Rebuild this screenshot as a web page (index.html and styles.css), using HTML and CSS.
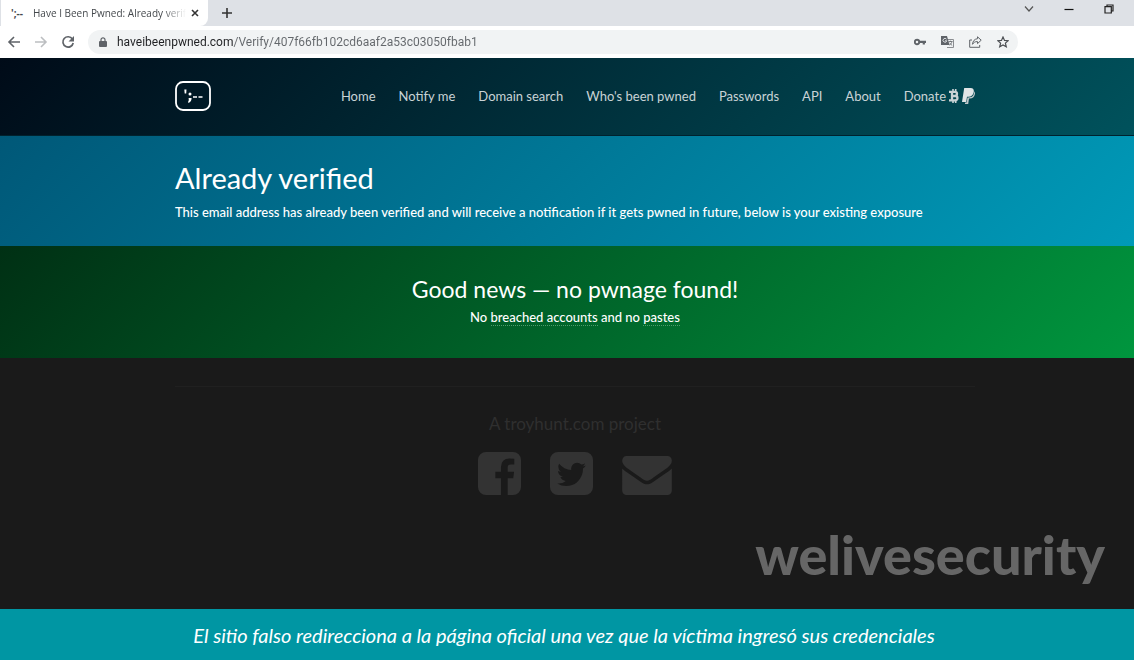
FILE: index.html
```html
<!DOCTYPE html>
<html lang="en">
<head>
    <meta charset="UTF-8">
    <title>Have I Been Pwned: Already verified</title>
    <link rel="stylesheet" href="styles.css">
</head>
<body>
    <div class="tab-strip">
        <div class="tab">
            <span class="favicon">';--</span>
            <span class="tab-title">Have I Been Pwned: Already verif</span>
            <button class="icon-btn tab-close" aria-label="Close tab">
                <svg width="8" height="8" viewBox="0 0 8 8"><path d="M1 1l6 6M7 1L1 7" stroke="#333" stroke-width="1.6"/></svg>
            </button>
        </div>
        <button class="icon-btn new-tab" aria-label="New tab">
            <svg width="12" height="12" viewBox="0 0 12 12"><path d="M6 1v10M1 6h10" stroke="#333" stroke-width="1.6"/></svg>
        </button>
        <div class="window-controls">
            <button class="icon-btn" aria-label="Search tabs">
                <svg width="10" height="10" viewBox="0 0 10 10"><path d="M1 2.500l4 4.500 4-4.500" fill="none" stroke="#555" stroke-width="1.200"/></svg>
            </button>
            <button class="icon-btn" aria-label="Minimize">
                <svg width="10" height="10" viewBox="0 0 10 10"><path d="M0.500 5.500h9" stroke="#111" stroke-width="1.200"/></svg>
            </button>
            <button class="icon-btn" aria-label="Restore">
                <svg width="10" height="10" viewBox="0 0 10 10"><path d="M1 2.700h6.300v6.300H1zM3 2.500V1h6v6H7.500" fill="none" stroke="#222" stroke-width="1.200"/></svg>
            </button>
        </div>
    </div>

    <div class="toolbar">
        <button class="icon-btn" aria-label="Back">
            <svg width="14" height="14" viewBox="0 0 14 14"><path d="M13 7H2M7 2L2 7l5 5" fill="none" stroke="#5f6368" stroke-width="1.600"/></svg>
        </button>
        <button class="icon-btn" aria-label="Forward">
            <svg width="14" height="14" viewBox="0 0 14 14"><path d="M1 7h11M7 2l5 5-5 5" fill="none" stroke="#bcbec1" stroke-width="1.600"/></svg>
        </button>
        <button class="icon-btn" aria-label="Reload">
            <svg width="14" height="14" viewBox="0 0 14 14"><path d="M11.400 4A5.200 5.200 0 1 0 12.200 8" fill="none" stroke="#5f6368" stroke-width="1.700"/><path d="M13 1v5.500H7.500z" fill="#5f6368"/></svg>
        </button>
        <div class="address-bar">
            <svg width="8" height="10" viewBox="0 0 8 10"><path d="M2 4V2.800a2 2 0 0 1 4 0V4" fill="none" stroke="#5f6368" stroke-width="1.200"/><rect y="4" width="8" height="6" rx="1" fill="#5f6368"/></svg>
            <input type="text" class="url" aria-label="Address" value="haveibeenpwned.com/Verify/407f66fb102cd6aaf2a53c03050fbab1">
            <button class="icon-btn" aria-label="Passwords">
                <svg width="12" height="12" viewBox="0 0 12 12"><circle cx="3" cy="6" r="2.200" fill="none" stroke="#5f6368" stroke-width="1.900"/><path d="M5 5.800h7M9.800 6v2.600" stroke="#5f6368" stroke-width="2.200"/></svg>
            </button>
            <button class="icon-btn" aria-label="Translate">
                <svg width="13" height="12" viewBox="0 0 13 12"><path d="M5 3.500h7.500v8H6" fill="none" stroke="#8a8d91"/><path d="M0 0h6l2.500 9H0z" fill="#5f6368"/><path d="M5.500 3.200A1.900 1.900 0 1 0 5.800 4.800H4" fill="none" stroke="#e8eaed" stroke-width=".9"/><path d="M7.500 5.500h4M9.500 4.700v.8M11 5.500c-.5 2-1.500 3-2.600 3.600M8.600 7l2.600 2.500" fill="none" stroke="#5f6368" stroke-width=".8"/></svg>
            </button>
            <button class="icon-btn" aria-label="Share">
                <svg width="13" height="12" viewBox="0 0 13 12"><path d="M3 4H.700v7.300h10V9" fill="none" stroke="#5f6368"/><path d="M8.500.800l3.700 3.400-3.700 3.400V5.600C6 5.500 4.500 6.500 3.500 8.300 3.800 5 5.500 3 8.500 2.700z" fill="none" stroke="#5f6368"/></svg>
            </button>
            <button class="icon-btn" aria-label="Bookmark">
                <svg width="12" height="12" viewBox="0 0 12 12"><path d="M6 1l1.500 3.400 3.700.300-2.800 2.400.9 3.700L6 8.900l-3.300 1.900.9-3.700L.800 4.700l3.700-.300z" fill="none" stroke="#4b4e52" stroke-width="1.200"/></svg>
            </button>
        </div>
    </div>

    <header class="band navbar">
        <div class="container nav-row">
            <a class="logo" href="#" aria-label="Have I Been Pwned">
                <svg width="36" height="30" viewBox="0 0 36 30"><rect x="1" y="1" width="34" height="28" rx="7" fill="none" stroke="#fff" stroke-width="1.800"/><path d="M9.300 8.500h2.200l-.3 4h-1.500z" fill="#fff"/><circle cx="15" cy="13" r="1.500" fill="#fff"/><path d="M13.600 17h3c0 2.300-.9 4-2.900 4.900l-.7-1c.7-.6 1-1.500.6-3.900z" fill="#fff"/><path d="M18 16h4M23.500 16h4" stroke="#fff" stroke-width="1.500"/></svg>
            </a>
            <nav class="nav-links">
                <a href="#">Home</a>
                <a href="#">Notify me</a>
                <a href="#">Domain search</a>
                <a href="#">Who's been pwned</a>
                <a href="#">Passwords</a>
                <a href="#">API</a>
                <a href="#">About</a>
                <a href="#" class="donate">Donate
                    <svg width="10" height="14" viewBox="0 0 10 14"><path d="M4 0v2M6.700 0v2M4 12v2M6.700 12v2" stroke="#c9d3d6" stroke-width="1.600"/><path d="M0 2.800h6a1.900 1.900 0 0 1 0 4H3M3 7h3.300a2.100 2.100 0 0 1 0 4.300H0M3 2.800v8.500" fill="none" stroke="#c9d3d6" stroke-width="2.300"/></svg>
                    <svg width="13" height="16" viewBox="0 0 13 16"><path d="M2.200 0h6.300c2.600 0 3.700 1.600 3.300 4.100-.6 3-2.500 4.700-5.400 4.700H5L4.200 14H0z" fill="#e0e4e6"/><path d="M12.300 3.200c.8.900.8 2.200.5 3.300-.6 2.600-2.300 4-4.800 4H7L6.200 16H2.900l.3-1.400h1.400l.9-5.200h1.300c3.200 0 5.200-1.800 5.500-6.200z" fill="#c0c8cb"/></svg>
                </a>
            </nav>
        </div>
    </header>

    <section class="band hero">
        <div class="container">
            <h1>Already verified</h1>
            <p>This email address has already been verified and will receive a notification if it gets pwned in future, below is your existing exposure</p>
        </div>
    </section>

    <section class="band result">
        <div class="container">
            <h2>Good news — no pwnage found!</h2>
            <p>No <a href="#">breached accounts</a> and no <a href="#">pastes</a></p>
        </div>
    </section>

    <footer class="band footer">
        <div class="container footer-inner">
            <p>A <a href="#">troyhunt.com</a> project</p>
            <div class="social">
                <a href="#" aria-label="Facebook">
                    <svg width="43" height="43" viewBox="128 128 1536 1536"><path d="M1376 128q119 0 203.500 84.500t84.500 203.500v960q0 119-84.500 203.500t-203.500 84.500h-188v-595h199l30-232h-229v-148q0-56 23.500-84t91.500-28l122-1v-207q-63-9-178-9-136 0-217.500 80t-81.500 226v171h-200v232h200v595h-532q-119 0-203.500-84.500t-84.500-203.500v-960q0-119 84.500-203.500t203.500-84.500h960z"/></svg>
                </a>
                <a href="#" aria-label="Twitter">
                    <svg width="43" height="43" viewBox="128 128 1536 1536"><path d="M1408 610q-56 25-121 34 68-40 93-117-65 38-134 51-61-66-153-66-87 0-148.500 61.500t-61.500 148.500q0 29 5 48-129-7-242-65t-192-155q-29 50-29 106 0 114 91 175-47-1-100-26v2q0 75 50 133.500t123 72.500q-29 8-51 8-13 0-39-4 21 63 74.500 104t121.500 42q-116 90-261 90-26 0-50-3 148 94 322 94 112 0 210-35.500t168-95 120.500-137 75-162 24.500-168.500q0-18-1-27 63-45 105-109zm256-194v960q0 119-84.500 203.500t-203.500 84.500h-960q-119 0-203.500-84.500t-84.500-203.500v-960q0-119 84.500-203.500t203.500-84.500h960q119 0 203.500 84.500t84.500 203.500z"/></svg>
                </a>
                <a href="#" aria-label="Email">
                    <svg width="50" height="39" viewBox="0 256 1792 1408"><path d="M1792 710v794q0 66-47 113t-113 47h-1472q-66 0-113-47t-47-113v-794q44 49 101 87 362 246 497 345 57 42 92.500 65.500t94.500 48 110 24.500h2q51 0 110-24.500t94.500-48 92.500-65.500q170-123 498-345 57-39 100-87zm0-294q0 79-49 151t-122 123q-376 261-468 325-10 7-42.500 31t-54 38.500-52 32.500-57.500 27-50 9h-2q-23 0-50-9t-57.500-27-52-32.500-54-38.500-42.500-31q-91-64-262-182.500t-205-142.500q-62-42-117-115.500t-55-136.500q0-78 41.500-130t118.500-52h1472q65 0 112.500 47t47.500 113z"/></svg>
                </a>
            </div>
        </div>
        <div class="brand">welivesecurity</div>
    </footer>

    <div class="caption">El sitio falso redirecciona a la página oficial una vez que la víctima ingresó sus credenciales</div>
</body>
</html>
```

FILE: styles.css
```css
* {
    box-sizing: border-box;
}
body {
    font-family: Lato, "Liberation Sans", sans-serif;
    font-size: 13px;
    line-height: 20px;
    margin: 0;
    min-height: 100vh;
    display: flex;
    flex-direction: column;
    background: #1a1a1a;
    color: #fff;
}
h1, h2, p {
    margin: 0;
    font-weight: 400;
}
a {
    color: inherit;
    text-decoration: none;
}
svg {
    display: block;
}

/* browser chrome */
.icon-btn {
    display: flex;
    padding: 0;
    border: none;
    background: none;
    cursor: pointer;
}
.tab-strip {
    display: flex;
    align-items: stretch;
    height: 26px;
    background: #dee1e6;
}
.tab {
    display: flex;
    align-items: center;
    width: 207px;
    padding: 0 9px 0 10px;
    margin-left: 1px;
    background: #fff;
    border-radius: 0 0 8px 0;
    color: #45494d;
    font-family: "Open Sans", sans-serif;
    font-size: 10px;
}
.favicon {
    flex-shrink: 0;
    width: 22px;
    font-weight: 700;
}
.tab-title {
    flex: 1;
    white-space: nowrap;
    mask-image: linear-gradient(90deg, #000 85%, transparent);
}
.tab-close {
    margin: 0 0 0 5px;
}
.new-tab {
    align-items: center;
    margin-left: 13px;
}
.window-controls {
    display: flex;
    gap: 30px;
    margin-left: auto;
    padding: 4px 20px 0 0;
}
.toolbar {
    display: flex;
    align-items: center;
    gap: 13px;
    height: 32px;
    padding: 0 116px 0 7px;
    background: #fff;
}
.address-bar {
    display: flex;
    flex: 1;
    align-items: center;
    gap: 15px;
    height: 24px;
    padding: 0 9px 0 11px;
    border-radius: 12px;
    background: #f1f3f4;
}
.url {
    flex: 1;
    min-width: 0;
    margin-left: -5px;
    padding: 0;
    border: none;
    outline: none;
    font-family: Roboto, sans-serif;
    font-size: 12px;
    color: transparent;
    /* domain dark, path grey */
    background: linear-gradient(90deg, #202124 116px, #63676b 116px);
    background-clip: text;
}

/* page */
.band {
    padding-left: 16px;
}
.container {
    max-width: 800px;
    margin: 0 auto;
}
.navbar {
    padding-top: 23px;
    padding-bottom: 24px;
    border-bottom: 1px solid #00222e;
    background: linear-gradient(135deg, #000b18, #00525c);
}
.nav-row {
    display: flex;
    justify-content: space-between;
    align-items: center;
}
.nav-links {
    display: flex;
    gap: 23px;
    color: #c9d3d6;
}
.donate {
    display: flex;
    align-items: center;
    gap: 3px;
}
.hero {
    padding-top: 24px;
    padding-bottom: 24px;
    background: linear-gradient(135deg, #005878, #009ab8);
}
.hero h1 {
    font-size: 29px;
    line-height: 36px;
    margin-bottom: 6px;
}
.hero p, .result p {
    font-weight: 500;
}
.result {
    padding-top: 28px;
    padding-bottom: 31px;
    text-align: center;
    background: linear-gradient(135deg, #003014, #00963e);
}
.result h2 {
    font-size: 23px;
    line-height: 30px;
    margin-bottom: 3px;
}
.result a {
    border-bottom: 1px dotted #4f9a6c;
}
.footer {
    display: flex;
    flex: 1;
    flex-direction: column;
    padding-top: 28px;
    color: #2f2f2f;
}
.footer-inner {
    width: 100%;
    padding-top: 27px;
    border-top: 1px solid #202020;
    text-align: center;
    font-size: 17px;
}
.social {
    display: flex;
    justify-content: center;
    align-items: flex-end;
    gap: 29px;
    margin-top: 18px;
    fill: #333;
}
.brand {
    margin-top: auto;
    padding: 0 29px 24px 0;
    text-align: right;
    font-size: 54px;
    font-weight: 900;
    line-height: 60px;
    color: #666;
}
.caption {
    padding: 13px 16px 12px 10px;
    background: #0096a3;
    font-size: 20px;
    font-style: italic;
    line-height: 26px;
    text-align: center;
}
```
